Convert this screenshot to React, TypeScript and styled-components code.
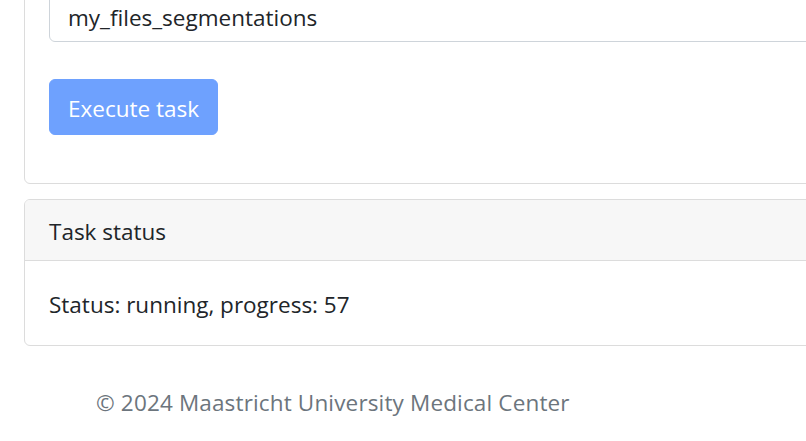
import React from "react";
import styled, { createGlobalStyle } from "styled-components";

const GlobalStyle = createGlobalStyle`
  html, body {
    margin: 0;
    padding: 0;
    background: #ffffff;
    overflow: hidden;
  }
  body {
    font-family: "Open Sans", "Noto Sans", "Liberation Sans", sans-serif;
    font-size: 22.5px;
    line-height: 36px;
    color: #212529;
  }
  * { box-sizing: border-box; }
`;

const Page = styled.div`
  width: 1200px;
  margin-top: -40px;
  padding-left: 24px;
`;

const Card = styled.section<{ $gap?: number }>`
  border: 1px solid #dcdcdc;
  border-radius: 6px;
  background: #ffffff;
  margin-top: ${(p) => p.$gap ?? 0}px;
  overflow: hidden;
`;

const CardHeader = styled.div`
  background: #f7f7f7;
  border-bottom: 1px solid #dcdcdc;
  padding: 14px 24px 10px;
`;

const CardBody = styled.div`
  padding: 24px;
`;

const Input = styled.input`
  display: block;
  width: 100%;
  height: 57px;
  padding: 13px 18px 5px;
  font: inherit;
  color: #212529;
  border: 1px solid #ced4da;
  border-radius: 6px;
  background: #ffffff;
  margin-bottom: 37px;
  outline: none;
`;

const Button = styled.button`
  display: block;
  height: 56px;
  padding: 11px 18px 7px;
  font: inherit;
  color: #ffffff;
  background: #6ea1fe;
  border: 1px solid #6ea1fe;
  border-radius: 6px;
  margin-bottom: 24px;
`;

const StatusText = styled.p`
  margin: 0;
  padding-top: 2px;
  margin-bottom: -2px;
`;

const Footer = styled.footer`
  margin-top: 39px;
  padding-left: 72px;
  color: #6c757d;
  letter-spacing: 0.15px;
`;

export default function App() {
  return (
    <>
      <GlobalStyle />
      <Page>
        <Card>
          <CardBody>
            <Input readOnly value="my_files_segmentations" />
            <Button disabled>Execute task</Button>
          </CardBody>
        </Card>
        <Card $gap={15}>
          <CardHeader>Task status</CardHeader>
          <CardBody>
            <StatusText>Status: running, progress: 57</StatusText>
          </CardBody>
        </Card>
        <Footer>© 2024 Maastricht University Medical Center</Footer>
      </Page>
    </>
  );
}
